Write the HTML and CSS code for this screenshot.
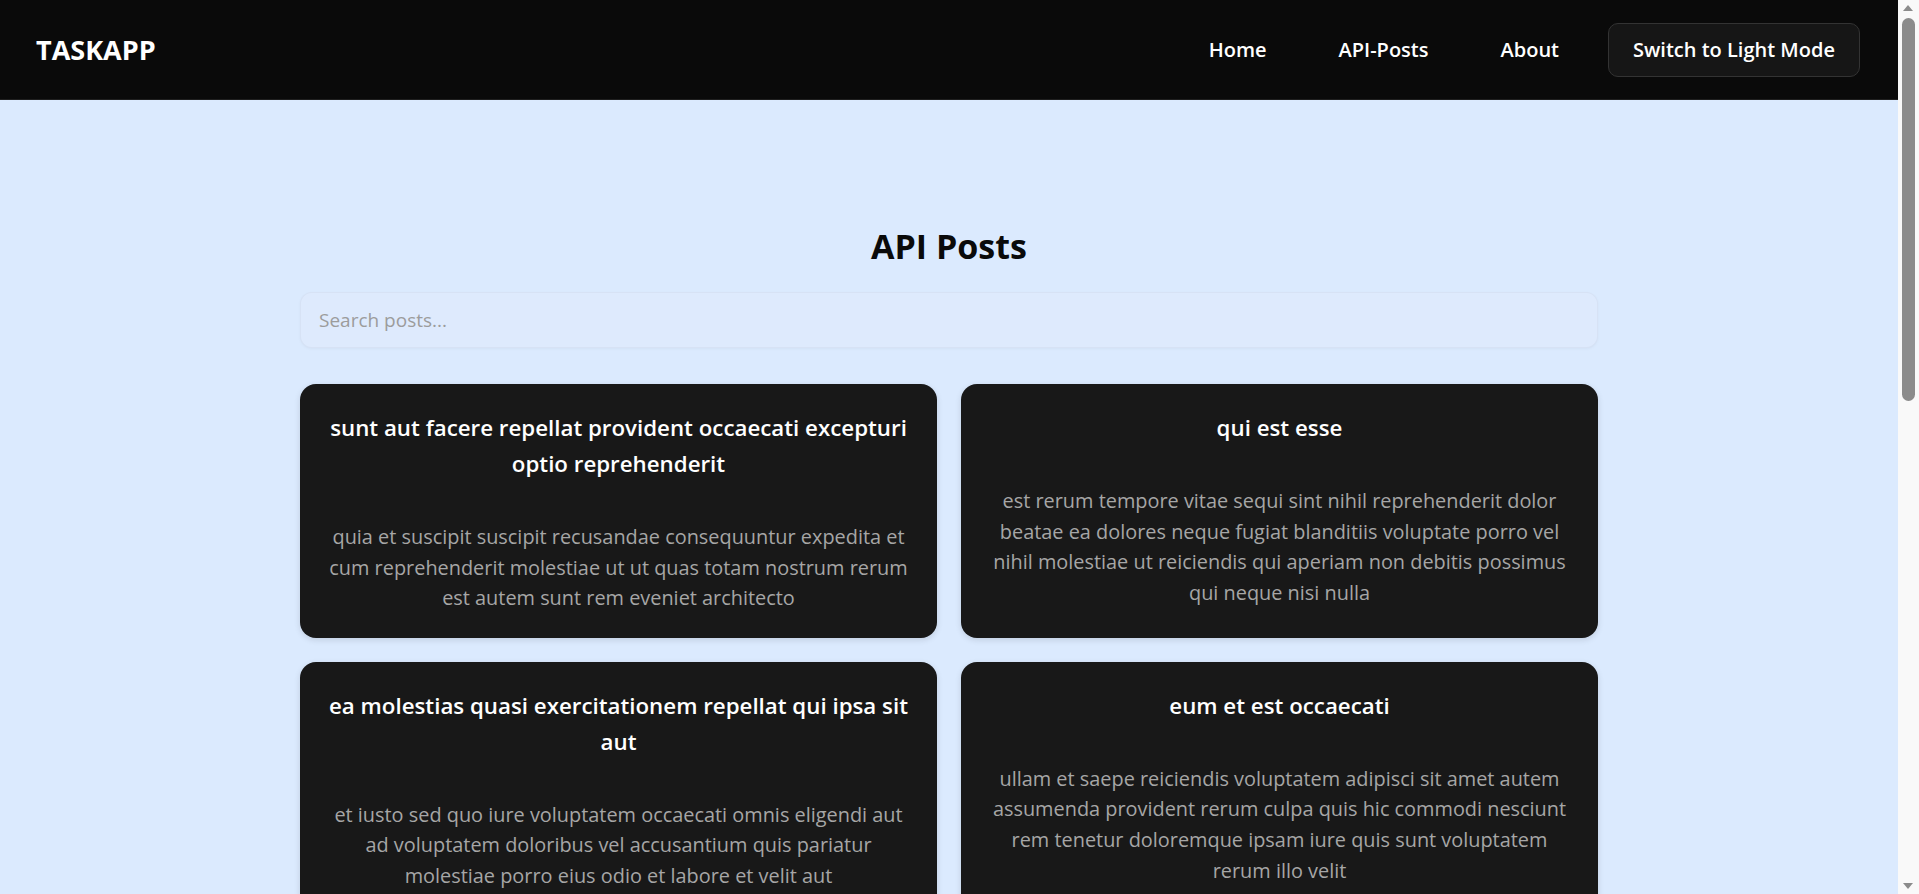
FILE: index.html
```html
<!DOCTYPE html>
<html lang="en">
<head>
<meta charset="utf-8">
<title>TaskApp - API Posts</title>
<link rel="stylesheet" href="styles.css">
</head>
<body>
<header class="topbar">
  <div class="logo">TASKAPP</div>
  <nav class="nav">
    <a class="nav-link" href="#">Home</a>
    <a class="nav-link" href="#">API-Posts</a>
    <a class="nav-link" href="#">About</a>
    <button class="theme-btn" type="button">Switch to Light Mode</button>
  </nav>
</header>
<main class="page">
  <h1 class="page-title">API Posts</h1>
  <input class="search" type="text" placeholder="Search posts...">
  <section class="grid">
    <article class="card">
      <h3 class="card-title">sunt aut facere repellat provident occaecati excepturi optio reprehenderit</h3>
      <p class="card-body">quia et suscipit suscipit recusandae consequuntur expedita et cum reprehenderit molestiae ut ut quas totam nostrum rerum est autem sunt rem eveniet architecto</p>
    </article>
    <article class="card">
      <h3 class="card-title">qui est esse</h3>
      <p class="card-body">est rerum tempore vitae sequi sint nihil reprehenderit dolor beatae ea dolores neque fugiat blanditiis voluptate porro vel nihil molestiae ut reiciendis qui aperiam non debitis possimus qui neque nisi nulla</p>
    </article>
    <article class="card">
      <h3 class="card-title">ea molestias quasi exercitationem repellat qui ipsa sit aut</h3>
      <p class="card-body">et iusto sed quo iure voluptatem occaecati omnis eligendi aut ad voluptatem doloribus vel accusantium quis pariatur molestiae porro eius odio et labore et velit aut</p>
    </article>
    <article class="card">
      <h3 class="card-title">eum et est occaecati</h3>
      <p class="card-body">ullam et saepe reiciendis voluptatem adipisci sit amet autem assumenda provident rerum culpa quis hic commodi nesciunt rem tenetur doloremque ipsam iure quis sunt voluptatem rerum illo velit</p>
    </article>
    <article class="card">
      <h3 class="card-title">nesciunt quas odio</h3>
      <p class="card-body">repudiandae veniam quaerat sunt sed alias aut fugiat sit autem sed est voluptatem omnis possimus esse voluptatibus quis est aut tenetur dolor neque</p>
    </article>
    <article class="card">
      <h3 class="card-title">dolorem eum magni eos aperiam quia</h3>
      <p class="card-body">ut aspernatur corporis harum nihil quis provident sequi mollitia nobis aliquid molestiae perspiciatis et ea nemo ab reprehenderit accusantium quas voluptate dolores velit et doloremque molestiae</p>
    </article>
    <article class="card">
      <h3 class="card-title">magnam facilis autem</h3>
      <p class="card-body">dolore placeat quibusdam ea quo vitae magni quis enim qui quis quo nemo aut saepe quidem repellat excepturi ut quia sunt ut sequi eos ea sed quas</p>
    </article>
    <article class="card">
      <h3 class="card-title">dolorem dolore est ipsam</h3>
      <p class="card-body">dignissimos aperiam dolorem qui eum facilis quibusdam animi sint suscipit qui sint possimus cum quaerat magni maiores excepturi ipsam ut commodi dolor voluptatum modi aut vitae</p>
    </article>
    <article class="card">
      <h3 class="card-title">nesciunt iure omnis dolorem tempora et accusantium</h3>
      <p class="card-body">consectetur animi nesciunt iure dolore enim quia ad veniam autem ut quam aut nobis et est aut quod aut provident voluptas autem voluptas</p>
    </article>
    <article class="card">
      <h3 class="card-title">optio molestias id quia eum</h3>
      <p class="card-body">quo et expedita modi cum officia vel magni doloribus qui repudiandae vero nisi sit quos veniam quod sed accusamus veritatis error</p>
    </article>
  </section>
  <div class="pager">
    <button class="pager-btn" type="button">Previous</button>
    <span class="pager-info">Page 1 of 10</span>
    <button class="pager-btn" type="button">Next</button>
  </div>
</main>
<div class="scrollbar" aria-hidden="true">
  <span class="sb-arrow sb-up"></span>
  <span class="sb-thumb"></span>
  <span class="sb-arrow sb-down"></span>
</div>
</body>
</html>
```
FILE: styles.css
```css
* { box-sizing: border-box; }

html, body {
  margin: 0;
  padding: 0;
}

body {
  background: #dbeafe;
  font-family: "Open Sans", "Noto Sans", "Liberation Sans", sans-serif;
  color: #111;
  padding-right: 21px;
}

.topbar {
  height: 100px;
  background: #0a0a0a;
  border-bottom: 1px solid #1f1f1f;
  display: flex;
  align-items: center;
  justify-content: space-between;
  padding: 0 38px 0 36px;
}

.logo {
  color: #fff;
  font-weight: 700;
  font-size: 27px;
}

.nav {
  display: flex;
  align-items: center;
}

.nav-link {
  color: #fff;
  text-decoration: none;
  font-weight: 600;
  font-size: 20px;
  padding: 0 36px;
}

.nav-link:last-of-type {
  padding-right: 49px;
}

.theme-btn {
  height: 54px;
  width: 252px;
  padding: 0;
  background: #161616;
  border: 1px solid #333;
  border-radius: 10px;
  color: #fff;
  font-family: inherit;
  font-weight: 600;
  font-size: 20px;
}

.page {
  width: 1298px;
  margin: 0 auto;
  padding: 123px 0 120px;
}

.page-title {
  margin: 0 0 23px;
  text-align: center;
  font-size: 34px;
  font-weight: 700;
  color: #0a0a0a;
}

.search {
  display: block;
  width: 100%;
  height: 56px;
  padding: 0 18px;
  background: #deeafd;
  border: 1px solid rgba(0, 0, 0, 0.03);
  border-radius: 12px;
  box-shadow: 0 1px 3px rgba(0, 0, 0, 0.04);
  font-family: inherit;
  font-size: 19px;
  color: #222;
  outline: none;
  margin-bottom: 36px;
}

.search::placeholder {
  color: #9c9c9c;
}

.grid {
  display: grid;
  grid-template-columns: 1fr 1fr;
  gap: 24px;
}

.card {
  background: #181818;
  border-radius: 16px;
  padding: 26px 24px 24px;
  box-shadow: 0 2px 6px rgba(0, 0, 0, 0.12);
  text-align: center;
}

.card-title {
  margin: 0 0 40px;
  color: #fff;
  font-size: 22.3px;
  font-weight: 600;
  line-height: 36px;
}

.card-body {
  margin: 0;
  color: #a6a6a6;
  font-size: 19.9px;
  line-height: 30.6px;
}

.pager {
  display: flex;
  justify-content: center;
  align-items: center;
  gap: 16px;
  margin-top: 40px;
}

.pager-btn {
  background: #161616;
  color: #fff;
  border: 1px solid #333;
  border-radius: 8px;
  padding: 10px 20px;
  font-family: inherit;
  font-size: 16px;
  font-weight: 600;
}

.pager-info {
  font-size: 16px;
  color: #111;
}

/* emulated browser scrollbar */
.scrollbar {
  position: fixed;
  top: 0;
  right: 0;
  width: 21px;
  height: 100vh;
  background: #f9f9f9;
}

.sb-thumb {
  position: absolute;
  left: 4px;
  top: 18px;
  width: 13px;
  height: 383px;
  border-radius: 7px;
  background: #8b8b8b;
}

.sb-arrow {
  position: absolute;
  left: 5px;
  width: 0;
  height: 0;
  border-left: 5px solid transparent;
  border-right: 5px solid transparent;
}

.sb-up {
  top: 5px;
  border-bottom: 6px solid #8b8b8b;
}

.sb-down {
  bottom: 5px;
  border-top: 6px solid #8b8b8b;
}
```
